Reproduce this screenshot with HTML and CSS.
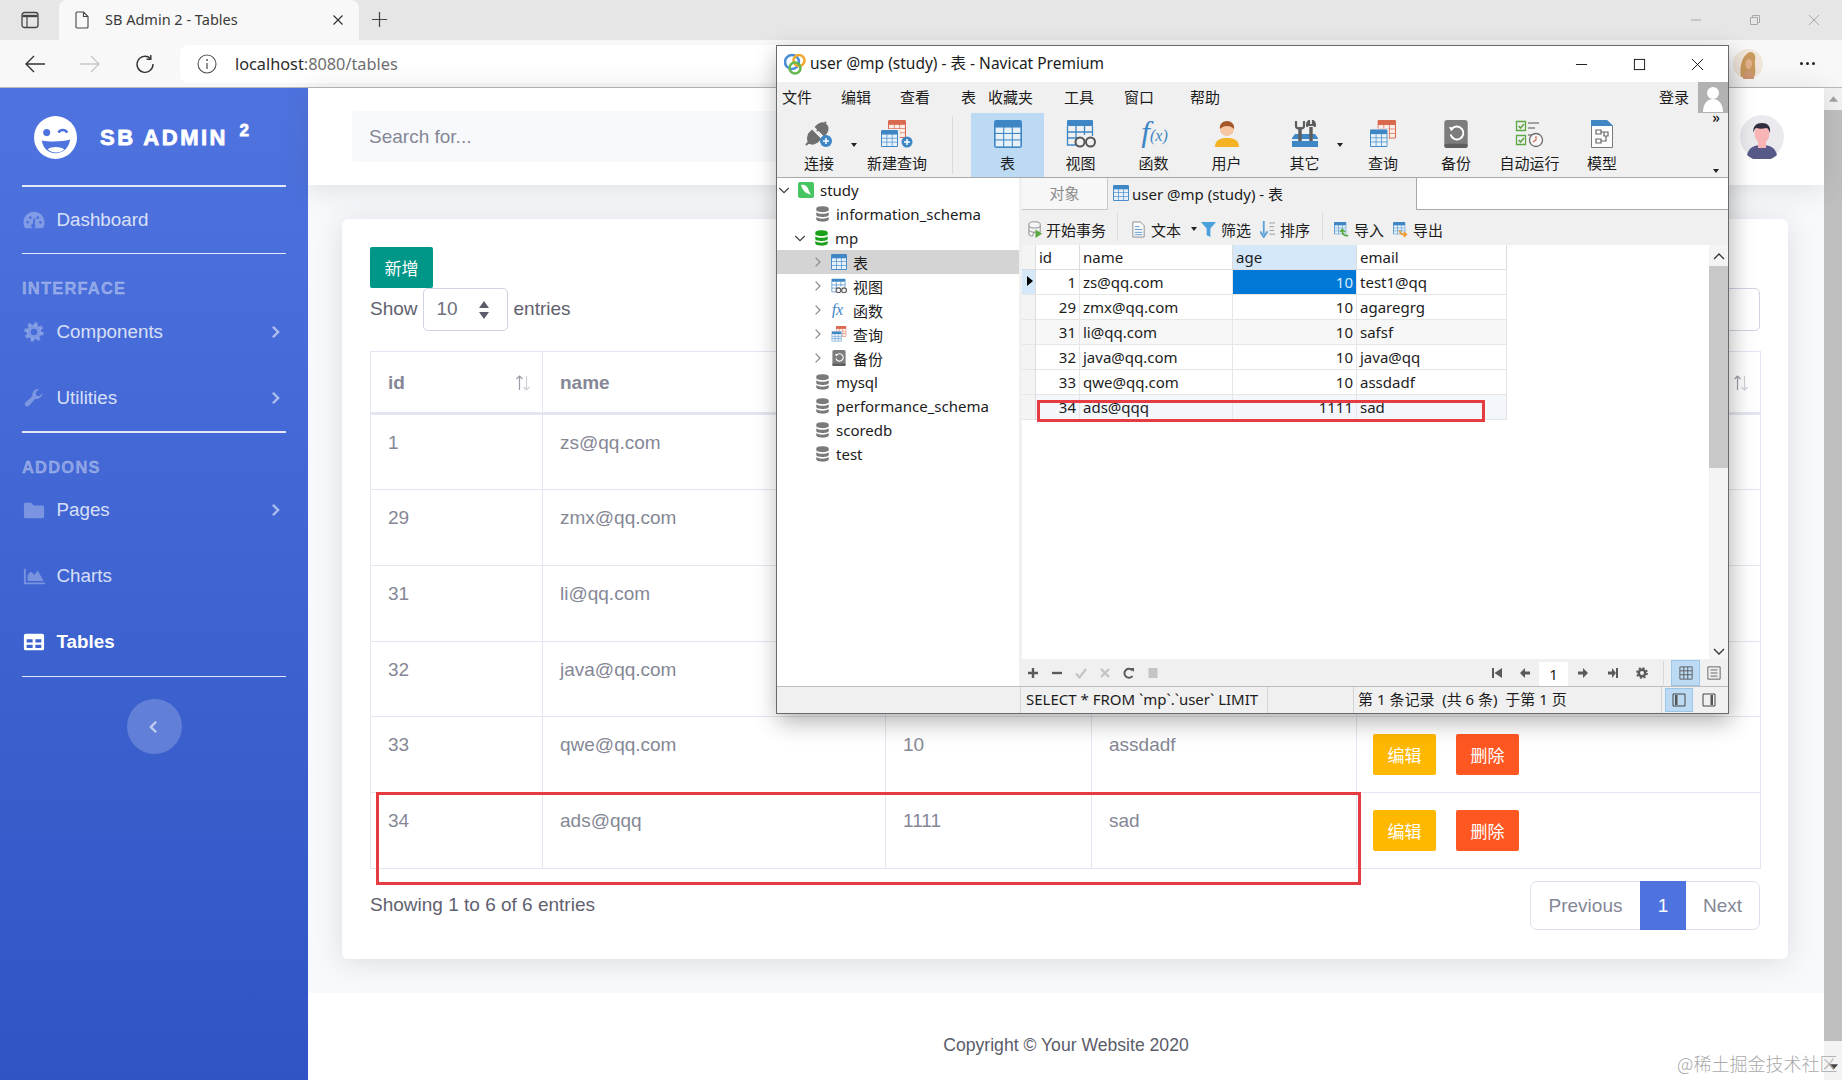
FILE: index.html
```html
<!DOCTYPE html>
<html lang="zh">
<head>
<meta charset="utf-8">
<title>SB Admin 2 - Tables</title>
<link rel="stylesheet" href="styles.css">
</head>
<body>
<svg class="sprite" xmlns="http://www.w3.org/2000/svg">
  <symbol id="t-blue" viewBox="0 0 26 26"><rect width="26" height="26" rx="2" fill="#3f86c5"/><g fill="#e6f1fa"><rect x="1.500" y="7" width="7" height="5"/><rect x="9.500" y="7" width="7" height="5"/><rect x="17.500" y="7" width="7" height="5"/><rect x="1.500" y="13" width="7" height="5"/><rect x="9.500" y="13" width="7" height="5"/><rect x="17.500" y="13" width="7" height="5"/><rect x="1.500" y="19" width="7" height="5.500"/><rect x="9.500" y="19" width="7" height="5.500"/><rect x="17.500" y="19" width="7" height="5.500"/></g></symbol>
  <symbol id="t-red" viewBox="0 0 26 26"><rect width="26" height="26" rx="2" fill="#d9694f"/><g fill="#fbeee9"><rect x="1.500" y="7" width="7" height="5"/><rect x="9.500" y="7" width="7" height="5"/><rect x="17.500" y="7" width="7" height="5"/><rect x="1.500" y="13" width="7" height="5"/><rect x="9.500" y="13" width="7" height="5"/><rect x="17.500" y="13" width="7" height="5"/><rect x="1.500" y="19" width="7" height="5.500"/><rect x="9.500" y="19" width="7" height="5.500"/><rect x="17.500" y="19" width="7" height="5.500"/></g></symbol>
  <symbol id="query" viewBox="0 0 30 30"><use href="#t-red" x="9" y="0" width="20" height="20"/><rect x="0" y="9" width="21" height="21" fill="#f0f0f0"/><use href="#t-blue" x="1" y="10" width="19" height="19"/></symbol>
  <symbol id="view" viewBox="0 0 30 28"><rect x="1" width="26" height="6" rx="1" fill="#3f86c5"/><path d="M1.500 6v19h11M26.500 6v10M1.500 12h25M1.500 18h11M10 6v12M18.500 6v9" fill="none" stroke="#3f86c5" stroke-width="1.300"/><circle cx="14" cy="22" r="4.500" fill="#f0f0f0" stroke="#555" stroke-width="2"/><circle cx="24.500" cy="22" r="4.500" fill="#f0f0f0" stroke="#555" stroke-width="2"/></symbol>
  <symbol id="db" viewBox="0 0 16 18"><path d="M1 3c0-3.500 14-3.500 14 0v1.500c0 3.200-14 3.200-14 0zM1 7c3 2.400 11 2.400 14 0v3c0 3-14 3-14 0zM1 12.500c3 2.400 11 2.400 14 0V15c0 3.500-14 3.500-14 0z" fill="currentColor"/></symbol>
  <symbol id="backup" viewBox="0 0 22 26"><rect width="22" height="26" rx="3" fill="#7c7c7c"/><rect y="22" width="22" height="4" rx="2" fill="#5e5e5e"/><path d="M7 8.500a6 6 0 1 1-1 5" fill="none" stroke="#fff" stroke-width="1.800"/><path d="M4.500 6.500l5 .5-3 3.500z" fill="#fff"/></symbol>
  <symbol id="plus" viewBox="0 0 12 12"><path d="M6 1v10M1 6h10" stroke="currentColor" stroke-width="2.400"/></symbol>
  <symbol id="minus" viewBox="0 0 12 12"><path d="M1 6h10" stroke="currentColor" stroke-width="2.400"/></symbol>
  <symbol id="check" viewBox="0 0 12 12"><path d="M1 6.500l3.500 4L11 2" fill="none" stroke="currentColor" stroke-width="2.200"/></symbol>
  <symbol id="cross" viewBox="0 0 12 12"><path d="M2 2l8 8M10 2l-8 8" stroke="currentColor" stroke-width="2.400"/></symbol>
  <symbol id="refresh" viewBox="0 0 12 12"><path d="M9.500 3.500A4.500 4.500 0 1 0 9.500 9" fill="none" stroke="currentColor" stroke-width="2"/><path d="M7.500 1h3.500v4z" fill="currentColor"/></symbol>
  <symbol id="stop" viewBox="0 0 12 12"><rect x="1.500" y="1" width="9" height="10" fill="currentColor"/></symbol>
  <symbol id="first" viewBox="0 0 12 12"><path d="M2 1v10" stroke="currentColor" stroke-width="2"/><path d="M11 1v10L3.500 6z" fill="currentColor"/></symbol>
  <symbol id="prev" viewBox="0 0 12 12"><path d="M1 6l5-5v3.500h5v3H6V11z" fill="currentColor"/></symbol>
  <symbol id="next" viewBox="0 0 12 12"><path d="M11 6L6 1v3.500H1v3h5V11z" fill="currentColor"/></symbol>
  <symbol id="last" viewBox="0 0 12 12"><path d="M10 1v10" stroke="currentColor" stroke-width="2"/><path d="M1 4.500h4V1l4 5-4 5V7.500H1z" fill="currentColor"/></symbol>
  <symbol id="gear" viewBox="0 0 24 24"><circle cx="12" cy="12" r="6.500" fill="none" stroke="currentColor" stroke-width="5"/><circle cx="12" cy="12" r="10" fill="none" stroke="currentColor" stroke-width="3.500" stroke-dasharray="4 3.850"/></symbol>
  <symbol id="chev-r" viewBox="0 0 10 16"><path d="M2 2l6 6-6 6" fill="none" stroke="currentColor" stroke-width="2.800"/></symbol>
  <symbol id="tree-r" viewBox="0 0 10 14"><path d="M2 1.500L7.500 7 2 12.500" fill="none" stroke="#8a8a8a" stroke-width="1.500"/></symbol>
  <symbol id="tree-d" viewBox="0 0 14 10"><path d="M1.500 2L7 7.500 12.500 2" fill="none" stroke="#444" stroke-width="1.500"/></symbol>
  <symbol id="sort" viewBox="0 0 18 18"><path d="M5.500 16V2M2.500 5l3-3 3 3" fill="none" stroke="#9b9ca8" stroke-width="1.200"/><path d="M12.500 2v14M9.500 13l3 3 3-3" fill="none" stroke="#cfd0d8" stroke-width="1.200"/></symbol>
</svg>

<header class="strip">
  <div class="strip-side">
    <svg class="strip-ic" viewBox="0 0 18 18"><rect x="1" y="1.500" width="16" height="15" rx="2.500" fill="none" stroke="#444" stroke-width="1.300"/><path d="M1.500 5h15" stroke="#444" stroke-width="2.400"/><path d="M6 5v11" stroke="#444" stroke-width="1.200"/></svg>
  </div>
  <div class="tab">
    <svg class="tab-ic" viewBox="0 0 14 18"><path d="M1 2a1 1 0 0 1 1-1h6.500L13 5.500V16a1 1 0 0 1-1 1H2a1 1 0 0 1-1-1zM8.500 1v4.500H13" fill="none" stroke="#444" stroke-width="1.100"/></svg>
    <span class="tab-title">SB Admin 2 - Tables</span>
    <svg class="tab-x" viewBox="0 0 12 12"><path d="M1.500 1.500l9 9M10.500 1.500l-9 9" stroke="#333" stroke-width="1.200"/></svg>
  </div>
  <svg class="tab-new" viewBox="0 0 18 18"><path d="M9 1v16M1 9h16" stroke="#444" stroke-width="1.300"/></svg>
  <div class="win-ctrl">
    <svg viewBox="0 0 12 12"><path d="M1 6h10" stroke="#a8a8a8" stroke-width="1"/></svg>
    <svg viewBox="0 0 12 12"><path d="M1.500 3.500h7v7h-7zM3.500 3.500v-2h7v7h-2" fill="none" stroke="#a8a8a8" stroke-width="1"/></svg>
    <svg viewBox="0 0 12 12"><path d="M1 1l10 10M11 1L1 11" stroke="#a8a8a8" stroke-width="1"/></svg>
  </div>
</header>
<nav class="addr">
  <svg class="addr-back" viewBox="0 0 22 18"><path d="M21 9H2M10 1L2 9l8 8" fill="none" stroke="#333" stroke-width="1.400"/></svg>
  <svg class="addr-fwd" viewBox="0 0 22 18"><path d="M1 9h19M12 1l8 8-8 8" fill="none" stroke="#c8c8c8" stroke-width="1.400"/></svg>
  <svg class="addr-rel" viewBox="0 0 20 20"><path d="M15.500 4.500A8 8 0 1 0 18 10" fill="none" stroke="#333" stroke-width="1.400"/><path d="M15.800 1v4.200h-4.200" fill="none" stroke="#333" stroke-width="1.400"/></svg>
  <div class="addr-field">
    <svg class="addr-info" viewBox="0 0 20 20"><circle cx="10" cy="10" r="9" fill="none" stroke="#555" stroke-width="1.100"/><path d="M10 9v6" stroke="#555" stroke-width="1.300"/><circle cx="10" cy="6" r="1" fill="#555"/></svg>
    <span class="url-host">localhost</span><span class="url-rest">:8080/tables</span>
  </div>
  <div class="addr-right">
    <svg class="addr-pic" viewBox="0 0 30 30"><circle cx="15" cy="15" r="15" fill="#f1e6da"/><path d="M8 28c-2-10 1-22 9-25 5 0 6 5 5 9s2 10-1 16z" fill="#c99a5c"/><path d="M13 12c2-3 6-2 6 2s-2 6-4 6-3-4-2-8z" fill="#e2b28c"/><path d="M10 30c0-6 3-9 6-9s5 4 5 9z" fill="#cf9672"/></svg>
    <span class="addr-more"><i></i><i></i><i></i></span>
  </div>
</nav>

<div class="page">
  <aside class="sidebar">
    <div class="brand">
      <svg class="brand-ic" viewBox="0 0 44 44"><circle cx="22" cy="22" r="22" fill="#fff"/><circle cx="13" cy="17" r="3.600" fill="#4e73df"/><path d="M25 17c2-3.500 7-3.500 9 0" fill="none" stroke="#4e73df" stroke-width="2.600"/><path d="M8 25c8 1.500 20 1.500 29-1-1 9-8 14-15 14S9 33 8 25z" fill="#4e73df"/><path d="M14 34c4-3 12-3 17 0-4 4-12 5-17 0z" fill="#fff"/></svg>
      <span class="brand-text">SB Admin <sup>2</sup></span>
    </div>
    <hr class="side-hr">
    <a class="nav-item">
      <svg class="nav-ic" viewBox="0 0 24 20"><path fill-rule="evenodd" d="M12 1A11.500 11.500 0 0 0 .5 12.500c0 2.500.7 4.800 2 6.500h19c1.300-1.700 2-4 2-6.500A11.500 11.500 0 0 0 12 1zm1.600 7.500l-1 6a2.300 2.300 0 1 1-2-.3l1-6zM5 11a1.500 1.500 0 1 0 0 3 1.500 1.500 0 0 0 0-3zm14 0a1.500 1.500 0 1 0 0 3 1.500 1.500 0 0 0 0-3zM8 6a1.500 1.500 0 1 0 0 3 1.500 1.500 0 0 0 0-3zm8 0a1.500 1.500 0 1 0 0 3 1.500 1.500 0 0 0 0-3z" fill="currentColor"/></svg>
      <span>Dashboard</span>
    </a>
    <hr class="side-hr">
    <div class="side-head">Interface</div>
    <a class="nav-item">
      <svg class="nav-ic" viewBox="0 0 24 24"><use href="#gear"/></svg>
      <span>Components</span>
      <svg class="nav-chev" viewBox="0 0 10 16"><use href="#chev-r"/></svg>
    </a>
    <a class="nav-item">
      <svg class="nav-ic" viewBox="0 0 24 24"><path d="M22 6.500a6.500 6.500 0 0 1-8.500 6.300L5.800 21.500a3 3 0 0 1-4.200-4.200l8.700-7.700A6.500 6.500 0 0 1 18 1.500l-4 4 .8 3.700 3.700.8 4-4c.3.500.5 1 .5 1.500z" fill="currentColor"/></svg>
      <span>Utilities</span>
      <svg class="nav-chev" viewBox="0 0 10 16"><use href="#chev-r"/></svg>
    </a>
    <hr class="side-hr">
    <div class="side-head side-head-b">Addons</div>
    <a class="nav-item">
      <svg class="nav-ic" viewBox="0 0 24 20"><path d="M1 4a2 2 0 0 1 2-2h6l2.500 3H21a2 2 0 0 1 2 2v10a2 2 0 0 1-2 2H3a2 2 0 0 1-2-2z" fill="currentColor"/></svg>
      <span>Pages</span>
      <svg class="nav-chev" viewBox="0 0 10 16"><use href="#chev-r"/></svg>
    </a>
    <a class="nav-item">
      <svg class="nav-ic" viewBox="0 0 24 20"><path d="M1 2h2v15h21v2H1z" fill="currentColor"/><path d="M5 15.500V9l3.500-4 4 4 3.500-5 6.500 11.500z" fill="currentColor"/></svg>
      <span>Charts</span>
    </a>
    <a class="nav-item nav-active">
      <svg class="nav-ic" viewBox="0 0 24 20"><path fill-rule="evenodd" d="M3 1h18a2 2 0 0 1 2 2v14a2 2 0 0 1-2 2H3a2 2 0 0 1-2-2V3a2 2 0 0 1 2-2zm1 6v3.500h6.500V7zm9.500 0v3.500H20V7zM4 13v3.500h6.500V13zm9.500 0v3.500H20V13z" fill="currentColor"/></svg>
      <span>Tables</span>
    </a>
    <hr class="side-hr side-hr-last">
    <div class="side-toggle"><svg viewBox="0 0 10 16"><path d="M8 2L2 8l6 6" fill="none" stroke="currentColor" stroke-width="2.800"/></svg></div>
  </aside>

  <main class="main">
    <div class="topbar">
      <div class="search">Search for...</div>
      <svg class="top-avatar" viewBox="0 0 44 44"><circle cx="22" cy="22" r="22" fill="#e9e9ee"/><path d="M7 40c2-8 8-10 15-10s13 2 15 10a22 22 0 0 1-30 0z" fill="#575a89"/><rect x="18" y="24" width="8" height="9" fill="#f9b5b5"/><ellipse cx="22" cy="19" rx="7.500" ry="9" fill="#f9b5b5"/><path d="M13.500 18c-1-7 3-10 8.500-10s9 3 8 10c-1-3-2-5-4-5-3 1-7 1-9 0-2 0-3 2-3.500 5z" fill="#2f2e41"/></svg>
    </div>

    <section class="card">
      <button class="btn-add">新增</button>
      <div class="len-row">
        <div class="len">
          <span class="len-t">Show</span>
          <span class="sel"><span class="len-t">10</span><svg viewBox="0 0 12 20"><path d="M6 1l5 7H1zM6 19l5-7H1z" fill="#5a5c69"/></svg></span>
          <span class="len-t">entries</span>
        </div>
        <div class="flt"><span class="flt-box"></span></div>
      </div>
      <table class="tbl">
        <colgroup><col class="c1"><col class="c2"><col class="c3"><col class="c4"><col class="c5"></colgroup>
        <thead>
          <tr>
            <th><div class="th-in">id<svg viewBox="0 0 18 18"><use href="#sort"/></svg></div></th>
            <th><div class="th-in">name<svg viewBox="0 0 18 18"><use href="#sort"/></svg></div></th>
            <th><div class="th-in">age<svg viewBox="0 0 18 18"><use href="#sort"/></svg></div></th>
            <th><div class="th-in">email<svg viewBox="0 0 18 18"><use href="#sort"/></svg></div></th>
            <th><div class="th-in">操作<svg viewBox="0 0 18 18"><use href="#sort"/></svg></div></th>
          </tr>
        </thead>
        <tbody>
          <tr><td>1</td><td>zs@qq.com</td><td>10</td><td>test1@qq</td><td class="acts"><button class="btn-e">编辑</button><button class="btn-d">删除</button></td></tr>
          <tr><td>29</td><td>zmx@qq.com</td><td>10</td><td>agaregrg</td><td class="acts"><button class="btn-e">编辑</button><button class="btn-d">删除</button></td></tr>
          <tr><td>31</td><td>li@qq.com</td><td>10</td><td>safsf</td><td class="acts"><button class="btn-e">编辑</button><button class="btn-d">删除</button></td></tr>
          <tr class="row-s"><td>32</td><td>java@qq.com</td><td>10</td><td>java@qq</td><td class="acts"><button class="btn-e">编辑</button><button class="btn-d">删除</button></td></tr>
          <tr><td>33</td><td>qwe@qq.com</td><td>10</td><td>assdadf</td><td class="acts"><button class="btn-e">编辑</button><button class="btn-d">删除</button></td></tr>
          <tr><td>34</td><td>ads@qqq</td><td>1111</td><td>sad</td><td class="acts"><button class="btn-e">编辑</button><button class="btn-d">删除</button></td></tr>
        </tbody>
      </table>
      <div class="info-row">
        <span class="info-t">Showing 1 to 6 of 6 entries</span>
        <div class="pager"><span class="pg-prev">Previous</span><span class="pg-cur">1</span><span class="pg-next">Next</span></div>
      </div>
    </section>

    <footer class="foot">Copyright © Your Website 2020</footer>
  </main>

  <div class="vscroll">
    <svg class="vs-up" viewBox="0 0 12 8"><path d="M6 1l5 6H1z" fill="#a3a3a3"/></svg>
    <div class="vs-thumb"></div>
    <svg class="vs-down" viewBox="0 0 12 8"><path d="M6 7L1 1h10z" fill="#444"/></svg>
  </div>
</div>

<div class="mark-red"></div>
<div class="watermark">@稀土掘金技术社区</div>

<div class="nv">
  <div class="nv-title">
    <svg class="nv-logo" viewBox="0 0 22 22"><circle cx="8" cy="9" r="7" fill="none" stroke="#4c8fd6" stroke-width="2.600"/><circle cx="15" cy="7.500" r="5.500" fill="none" stroke="#f0a92e" stroke-width="2.600"/><circle cx="11" cy="15" r="5.500" fill="none" stroke="#65b84f" stroke-width="2.600"/></svg>
    <span class="nv-title-t">user @mp (study) - 表 - Navicat Premium</span>
    <div class="nv-ctrl">
      <svg viewBox="0 0 14 14"><path d="M1 7h12" stroke="#111" stroke-width="1"/></svg>
      <svg viewBox="0 0 14 14"><rect x="1.500" y="1.500" width="11" height="11" fill="none" stroke="#111" stroke-width="1"/></svg>
      <svg viewBox="0 0 14 14"><path d="M1 1l12 12M13 1L1 13" stroke="#111" stroke-width="1"/></svg>
    </div>
  </div>
  <div class="nv-menu">
    <div class="nv-menu-items"><span>文件</span><span>编辑</span><span>查看</span><span>表</span><span>收藏夹</span><span>工具</span><span>窗口</span><span>帮助</span></div>
    <span class="nv-login">登录</span>
    <div class="nv-user"><svg viewBox="0 0 30 30"><circle cx="15" cy="11" r="6" fill="#fff"/><path d="M5 30c0-9 5-13 10-13s10 4 10 13z" fill="#fff"/></svg></div>
  </div>
  <div class="nv-tools">
    <div class="tool">
      <svg class="tool-ic" viewBox="0 0 34 28"><path d="M4 25l5-5M15 11l5-5 4-4M10 11l8 8-3 3c-3 2-6 2-8 0s-1-5 0-8zM14 7l2-2c3-2 6-2 8 0s2 5 0 8l-2 2z" fill="#6f6f6f" stroke="#6f6f6f" stroke-width="2"/><circle cx="24" cy="21" r="6" fill="#3f86c5"/><path d="M24 18v6M21 21h6" stroke="#fff" stroke-width="1.500"/></svg>
      <span>连接</span><i class="caret caret-a"></i>
    </div>
    <div class="tool">
      <svg class="tool-ic" viewBox="0 0 34 28"><use href="#t-red" x="8" y="0" width="18" height="18"/><rect x="0" y="9" width="20" height="19" fill="#f0f0f0"/><use href="#t-blue" x="1" y="10" width="17" height="17"/><circle cx="27" cy="22" r="5.500" fill="#3f86c5"/><path d="M27 19v6M24 22h6" stroke="#fff" stroke-width="1.500"/></svg>
      <span>新建查询</span>
    </div>
    <div class="tool-sep"></div>
    <div class="tool tool-on">
      <svg class="tool-ic" viewBox="0 0 26 26"><use href="#t-blue"/></svg>
      <span>表</span>
    </div>
    <div class="tool">
      <svg class="tool-ic" viewBox="0 0 30 28"><use href="#view"/></svg>
      <span>视图</span>
    </div>
    <div class="tool">
      <svg class="tool-ic" viewBox="0 0 30 28"><text class="fx-f" x="2" y="23">f</text><text class="fx-x" x="11" y="21">(x)</text></svg>
      <span>函数</span>
    </div>
    <div class="tool">
      <svg class="tool-ic" viewBox="0 0 26 28"><path d="M1 27c0-7 5-9 12-9s12 2 12 9z" fill="#f5b324"/><circle cx="13" cy="9" r="7" fill="#f6c6a4"/><path d="M6 9c-1-5 3-8 7-8s8 3 7 8c-2-2-4-3-7-3S8 7 6 9z" fill="#a5572b"/></svg>
      <span>用户</span>
    </div>
    <div class="tool">
      <svg class="tool-ic" viewBox="0 0 28 28"><path d="M1 18l3-4h20l3 4v9H1z" fill="#3f86c5"/><rect x="1" y="19" width="26" height="2" fill="#dcebf7"/><path d="M9 7v14M20 7v14" stroke="#5d5d5d" stroke-width="3.400"/><path d="M5 1v5c0 3.500 8 3.500 8 0V1M16.500 7c-1-3 0-5 1.500-6v4h4V1c1.500 1 2.500 3 1.500 6" fill="none" stroke="#5d5d5d" stroke-width="2.200"/></svg>
      <span>其它</span><i class="caret caret-b"></i>
    </div>
    <div class="tool">
      <svg class="tool-ic" viewBox="0 0 30 30"><use href="#query"/></svg>
      <span>查询</span>
    </div>
    <div class="tool">
      <svg class="tool-ic" viewBox="0 0 22 26"><use href="#backup"/></svg>
      <span>备份</span>
    </div>
    <div class="tool">
      <svg class="tool-ic" viewBox="0 0 30 28"><path d="M1.500 1.500h9v9h-9zM1.500 15.500h9v9h-9z" fill="#f0f0f0" stroke="#5da744" stroke-width="1.300"/><path d="M3.500 6l2 2 3.500-4M3.500 20l2 2 3.500-4" fill="none" stroke="#5da744" stroke-width="1.600"/><path d="M13 3h11M13 8h7M13 15h4" stroke="#a0a0a0" stroke-width="2"/><circle cx="21" cy="20" r="6.500" fill="#f8f8f8" stroke="#6b6b6b" stroke-width="1.300"/><path d="M21 16v4l-3 2" fill="none" stroke="#c75c4a" stroke-width="1.100"/></svg>
      <span>自动运行</span>
    </div>
    <div class="tool">
      <svg class="tool-ic" viewBox="0 0 22 28"><path d="M.5.500H16L21.500 6v21.500H.5z" fill="#fcfcfc" stroke="#7a7a7a"/><path d="M0 0h16l6 6H0z" fill="#3f86c5"/><path d="M5 10h5v4H5zM13 12h4v4h-4zM5 19h5v4H5zM10 12h3M15 16v5h-5" fill="none" stroke="#666" stroke-width="1.200"/></svg>
      <span>模型</span>
    </div>
    <span class="tools-more">»</span>
    <i class="caret caret-c"></i>
  </div>
  <div class="nv-body">
    <div class="tree">
      <div class="tr tr-0"><svg class="tw" viewBox="0 0 14 10"><use href="#tree-d"/></svg><svg class="tr-db" viewBox="0 0 16 16"><rect width="16" height="16" rx="2" fill="#47c560"/><path d="M3 3c4-1 7 2 8 6l2 4-3-1.500C7 11 4 7 3 3z" fill="#fff"/></svg><span>study</span></div>
      <div class="tr tr-1"><svg class="db-gray" viewBox="0 0 16 18"><use href="#db"/></svg><span>information_schema</span></div>
      <div class="tr tr-0b"><svg class="tw" viewBox="0 0 14 10"><use href="#tree-d"/></svg><svg class="db-green" viewBox="0 0 16 18"><use href="#db"/></svg><span>mp</span></div>
      <div class="tr tr-2 tr-sel"><svg class="tw-r" viewBox="0 0 10 14"><use href="#tree-r"/></svg><svg class="tr-ic" viewBox="0 0 26 26"><use href="#t-blue"/></svg><span>表</span></div>
      <div class="tr tr-2"><svg class="tw-r" viewBox="0 0 10 14"><use href="#tree-r"/></svg><svg class="tr-ic" viewBox="0 0 30 28"><use href="#view"/></svg><span>视图</span></div>
      <div class="tr tr-2"><svg class="tw-r" viewBox="0 0 10 14"><use href="#tree-r"/></svg><svg class="tr-ic" viewBox="0 0 24 24"><text class="fx-s" x="1" y="20">fx</text></svg><span>函数</span></div>
      <div class="tr tr-2"><svg class="tw-r" viewBox="0 0 10 14"><use href="#tree-r"/></svg><svg class="tr-ic" viewBox="0 0 30 30"><use href="#query"/></svg><span>查询</span></div>
      <div class="tr tr-2"><svg class="tw-r" viewBox="0 0 10 14"><use href="#tree-r"/></svg><svg class="tr-ic" viewBox="0 0 22 26"><use href="#backup"/></svg><span>备份</span></div>
      <div class="tr tr-1"><svg class="db-gray" viewBox="0 0 16 18"><use href="#db"/></svg><span>mysql</span></div>
      <div class="tr tr-1"><svg class="db-gray" viewBox="0 0 16 18"><use href="#db"/></svg><span>performance_schema</span></div>
      <div class="tr tr-1"><svg class="db-gray" viewBox="0 0 16 18"><use href="#db"/></svg><span>scoredb</span></div>
      <div class="tr tr-1"><svg class="db-gray" viewBox="0 0 16 18"><use href="#db"/></svg><span>test</span></div>
    </div>
    <div class="pane">
      <div class="tabs">
        <span class="tb-obj">对象</span>
        <span class="tb-user"><svg viewBox="0 0 26 26"><use href="#t-blue"/></svg>user @mp (study) - 表</span>
        <span class="tb-rest"></span>
      </div>
      <div class="sub">
        <span class="si si-begin"><svg viewBox="0 0 16 18"><path d="M1 3c0-3 12-3 12 0v9H6l-1 4c-2 0-4-.5-4-2z" fill="#f5f5f5" stroke="#8a8a8a"/><path d="M1 6c2 2 10 2 12 0M1 10c2 2 5 2 6 1.500" fill="none" stroke="#8a8a8a"/><path d="M8 9l7 4.500L8 18z" fill="#59a83f"/></svg>开始事务</span>
        <i class="sub-sep"></i>
        <span class="si si-text"><svg viewBox="0 0 14 18"><path d="M1 1h8l4 4v12H1z" fill="#fbfbfb" stroke="#8a8a8a"/><path d="M3 6h5M3 9h8M3 12h8M3 14.500h8" stroke="#5b93c9"/></svg>文本</span><i class="caret caret-d"></i>
        <span class="si si-filter"><svg viewBox="0 0 16 16"><path d="M0 0h16L10 7v9l-4-2V7z" fill="#48a0dc"/></svg>筛选</span>
        <span class="si si-sort"><svg viewBox="0 0 16 18"><path d="M4 0v14M0 11l4 6 4-6" fill="none" stroke="#5fa1d8" stroke-width="2"/><path d="M10 2h6M10 6h5M10 10h5M10 14h6" stroke="#999"/></svg>排序</span>
        <i class="sub-sep sub-sep-b"></i>
        <span class="si si-imp"><svg viewBox="0 0 18 18"><use href="#t-blue" width="15" height="15"/><path d="M17 16c-4 1-7-1-7-5M7.500 12l2.500-3 3 3" fill="none" stroke="#59a83f" stroke-width="2"/></svg>导入</span>
        <span class="si si-exp"><svg viewBox="0 0 18 18"><use href="#t-blue" width="15" height="15"/><path d="M8 10c0 4 3 5.500 7 5M13 12l3 3-3 3" fill="none" stroke="#ef9a2a" stroke-width="2"/></svg>导出</span>
      </div>
      <div class="gridwrap">
        <div class="grid-main">
          <table class="grid">
            <colgroup><col class="g0"><col class="g1"><col class="g2"><col class="g3"><col class="g4"></colgroup>
            <thead><tr><th class="rh"></th><th>id</th><th>name</th><th class="col-on">age</th><th>email</th></tr></thead>
            <tbody>
              <tr><td class="rh rh-on"><i class="tri"></i></td><td class="r">1</td><td>zs@qq.com</td><td class="r cell-on">10</td><td>test1@qq</td></tr>
              <tr><td class="rh"></td><td class="r">29</td><td>zmx@qq.com</td><td class="r">10</td><td>agaregrg</td></tr>
              <tr class="alt"><td class="rh"></td><td class="r">31</td><td>li@qq.com</td><td class="r">10</td><td>safsf</td></tr>
              <tr><td class="rh"></td><td class="r">32</td><td>java@qq.com</td><td class="r">10</td><td>java@qq</td></tr>
              <tr><td class="rh"></td><td class="r">33</td><td>qwe@qq.com</td><td class="r">10</td><td>assdadf</td></tr>
              <tr class="new"><td class="rh"></td><td class="r">34</td><td>ads@qqq</td><td class="r">1111</td><td>sad</td></tr>
            </tbody>
          </table>
          <div class="grid-red"></div>
        </div>
        <div class="grid-sb">
          <svg class="sb-up" viewBox="0 0 12 8"><path d="M1 7l5-5 5 5" fill="none" stroke="#333" stroke-width="1.300"/></svg>
          <div class="sb-thumb"></div>
          <svg class="sb-dn" viewBox="0 0 12 8"><path d="M1 1l5 5 5-5" fill="none" stroke="#333" stroke-width="1.300"/></svg>
        </div>
      </div>
      <div class="bbar">
        <div class="bb-left">
          <svg viewBox="0 0 12 12" class="b-d"><use href="#plus"/></svg>
          <svg viewBox="0 0 12 12" class="b-d"><use href="#minus"/></svg>
          <svg viewBox="0 0 12 12" class="b-l"><use href="#check"/></svg>
          <svg viewBox="0 0 12 12" class="b-l"><use href="#cross"/></svg>
          <svg viewBox="0 0 12 12" class="b-d"><use href="#refresh"/></svg>
          <svg viewBox="0 0 12 12" class="b-l"><use href="#stop"/></svg>
        </div>
        <div class="bb-right">
          <svg viewBox="0 0 12 12" class="b-d"><use href="#first"/></svg>
          <svg viewBox="0 0 12 12" class="b-d"><use href="#prev"/></svg>
          <span class="bb-page">1</span>
          <svg viewBox="0 0 12 12" class="b-d"><use href="#next"/></svg>
          <svg viewBox="0 0 12 12" class="b-d"><use href="#last"/></svg>
          <svg viewBox="0 0 24 24" class="b-d"><use href="#gear"/></svg>
          <i class="bb-sep"></i>
          <span class="bb-on"><svg viewBox="0 0 16 16"><path d="M1 1h14v14H1zM1 5.500h14M1 10h14M5.500 1v14M10 1v14" fill="none" stroke="#555"/></svg></span>
          <svg viewBox="0 0 16 16" class="bb-form"><path d="M1 1h14v14H1zM4 4.500h8M4 8h8M4 11.500h8" fill="none" stroke="#555"/></svg>
        </div>
      </div>
    </div>
  </div>
  <div class="status">
    <span class="st-a"></span>
    <span class="st-b">SELECT * FROM `mp`.`user` LIMIT</span>
    <span class="st-c"></span>
    <span class="st-d">第 1 条记录  (共 6 条)  于第 1 页</span>
    <span class="st-on"><svg viewBox="0 0 14 14"><path d="M1 1h12v12H1z" fill="none" stroke="#444"/><path d="M3 2h2.500v10H3z" fill="#555"/></svg></span>
    <svg class="st-ic" viewBox="0 0 14 14"><path d="M1 1h12v12H1z" fill="none" stroke="#444"/><path d="M8.500 2H11v10H8.500z" fill="#555"/></svg>
  </div>
</div>
</body>
</html>
```
FILE: styles.css
```css
* { box-sizing: border-box; }
html, body { margin: 0; padding: 0; }
body {
  width: 1842px;
  height: 1080px;
  overflow: hidden;
  position: relative;
  background: #fff;
  font-family: "Liberation Sans", "Noto Sans CJK SC", sans-serif;
  font-size: 19px;
  color: #858796;
}
.sprite { display: none; }
svg { display: block; flex: none; }

/* browser chrome */
.strip { height: 40px; background: #e6e6e6; display: flex; align-items: flex-end; position: relative; }
.strip-side { width: 59px; height: 40px; display: flex; align-items: center; padding-left: 21px; }
.strip-ic { width: 18px; height: 18px; }
.tab { width: 300px; height: 40px; background: #f8f8f8; border-radius: 8px 8px 0 0; display: flex; align-items: center; padding-left: 16px; color: #333; }
.tab-ic { width: 14px; height: 18px; margin-right: 16px; }
.tab-title { font: 14.500px/18px "Noto Sans", sans-serif; color: #3a3a3a; flex: 1; padding-bottom: 2px; }
.tab-x { width: 12px; height: 12px; margin-right: 15px; }
.tab-new { width: 17px; height: 17px; margin: 0 0 12px 12px; }
.win-ctrl { margin-left: auto; height: 40px; display: flex; align-items: center; gap: 47px; padding-right: 22px; }
.win-ctrl svg { width: 12px; height: 12px; }
.addr { height: 48px; background: #f8f8f8; border-bottom: 1px solid #b9b9b9; display: flex; align-items: center; }
.addr-back { width: 22px; height: 18px; margin-left: 24px; }
.addr-fwd { width: 22px; height: 18px; margin-left: 33px; }
.addr-rel { width: 20px; height: 20px; margin-left: 34px; }
.addr-field { width: 600px; height: 38px; margin-left: 25px; background: #fff; border-radius: 8px 0 0 8px; display: flex; align-items: center; font: 16.300px "Noto Sans", sans-serif; }
.addr-info { width: 20px; height: 20px; margin: 0 18px 0 17px; }
.url-host { color: #2b2b2b; }
.url-rest { color: #6e6e6e; }
.addr-right { margin-left: auto; display: flex; align-items: center; padding-right: 27px; }
.addr-pic { width: 30px; height: 30px; margin-right: 37px; }
.addr-more { display: flex; gap: 3px; }
.addr-more i { width: 3px; height: 3px; background: #222; border-radius: 50%; }

/* page frame */
.page { height: 992px; display: flex; }
.sidebar { width: 308px; flex: none; background: linear-gradient(180deg, #4e73df 3%, #2f55c4 100%); display: flex; flex-direction: column; }
.brand { height: 97px; display: flex; align-items: center; padding: 0 0 0 34px; }
.brand-ic { width: 43px; height: 43px; margin-top: 1px; }
.brand-text { margin: 2px 0 0 23px; font-size: 22px; font-weight: 700; text-transform: uppercase; letter-spacing: 2.500px; color: #fff; -webkit-text-stroke: .8px #fff; }
.brand-text sup { font-size: 17px; line-height: 0; vertical-align: 9px; margin-left: 3px; }
.side-hr { height: 1.500px; margin: 0 22px; border: 0; background: rgba(255, 255, 255, .85); flex: none; }
.side-hr-last { margin-top: 1px; }
.nav-item { height: 66px; display: flex; align-items: center; padding: 0 28px 0 23px; color: rgba(255, 255, 255, .8); font-size: 18.800px; }
.nav-ic { width: 22px; height: 20px; margin-right: 11.500px; color: rgba(255, 255, 255, .3); }
.nav-chev { width: 9px; height: 14px; margin-left: auto; color: rgba(255, 255, 255, .55); }
.nav-active { color: #fff; font-weight: 700; }
.nav-active .nav-ic { color: #fff; }
.side-head { padding: 24px 22px 0; height: 45px; line-height: 20px; font-size: 16.500px; font-weight: 700; letter-spacing: 1.200px; text-transform: uppercase; color: rgba(255, 255, 255, .4); -webkit-text-stroke: .3px rgba(255, 255, 255, .4); }
.side-head-b { height: 44px; }
.side-toggle { width: 55px; height: 55px; border-radius: 50%; background: rgba(255, 255, 255, .2); margin: 22px auto 0; display: flex; align-items: center; justify-content: center; color: rgba(255, 255, 255, .6); }
.side-toggle svg { width: 9px; height: 14px; margin-right: 2px; }

.main { flex: 1; min-width: 0; background: #f8f9fc; display: flex; flex-direction: column; }
.topbar { height: 97px; flex: none; background: #fff; box-shadow: 0 3px 28px rgba(58, 59, 69, .15); display: flex; align-items: center; padding: 0 40px 0 44px; position: relative; }
.search { width: 520px; height: 51px; background: #f8f9fc; border-radius: 4px; padding-left: 17px; line-height: 52px; color: #858796; }
.top-avatar { width: 44px; height: 44px; margin-left: auto; }

.card { margin: 34px 36px 34px 34px; height: 740px; flex: none; background: #fff; border-radius: 6px; box-shadow: 0 3px 28px rgba(58, 59, 69, .15); padding: 28px; position: relative; }
.btn-add { display: block; width: 63px; height: 41px; border: 0; border-radius: 2px; padding: 0; background: #009688; color: #fff; font: 17px "Noto Sans CJK SC", sans-serif; }
.len-row { height: 43px; display: flex; justify-content: space-between; align-items: center; }
.len { display: flex; align-items: center; color: #5f616f; }
.len-t { padding-bottom: 2px; }
.sel { width: 85px; height: 43px; margin: 0 6px 0 5px; border: 1px solid #d1d3e2; border-radius: 5px; display: flex; align-items: center; justify-content: space-between; padding: 0 17px 0 13px; color: #6e707e; }
.sel svg { width: 12px; height: 20px; }
.flt-box { display: block; width: 200px; height: 43px; border: 1px solid #d1d3e2; border-radius: 5px; }
.tbl { width: 1390px; margin-top: 20px; border-collapse: collapse; table-layout: fixed; }
.c1 { width: 172px; } .c2 { width: 343px; } .c3 { width: 206px; } .c4 { width: 265px; } .c5 { width: 404px; }
.tbl th, .tbl td { border: 1px solid #e3e6f0; text-align: left; }
.tbl th { height: 62px; padding: 2px 10px 0 17px; border-bottom: 3px solid #e3e6f0; color: #858796; font-weight: 700; }
.th-in { display: flex; justify-content: space-between; align-items: center; }
.th-in svg { width: 18px; height: 18px; }
.tbl td { height: 76px; padding: 14px 17px 0; vertical-align: top; line-height: 28px; }
.tbl .row-s td { height: 75px; }
.tbl .acts { padding-left: 16px; }
.tbl td button { display: inline-block; vertical-align: top; width: 63px; height: 41px; border: 0; border-radius: 2px; padding: 0; margin-top: 3px; color: #fff; font: 17px "Noto Sans CJK SC", sans-serif; }
.btn-e { background: #ffb800; }
.tbl td .btn-d { background: #ff5722; margin-left: 20px; }
.info-row { margin-top: 12px; display: flex; justify-content: space-between; align-items: center; color: #5f616f; }
.info-t { padding-bottom: 2px; }
.pager { display: flex; height: 49px; border: 1px solid #dddfeb; border-radius: 7px; line-height: 47px; color: #858796; }
.pg-prev { width: 109px; text-align: center; }
.pg-cur { width: 46px; margin: -1px 0; line-height: 49px; text-align: center; background: #4e73df; color: #fff; }
.pg-next { width: 73px; text-align: center; }
.foot { height: 87px; flex: none; background: #fff; text-align: center; padding-top: 37px; font-size: 17.600px; line-height: 30px; color: #5a5c69; }

.vscroll { width: 18px; flex: none; background: #f3f3f3; display: flex; flex-direction: column; align-items: center; }
.vs-up { width: 11px; height: 8px; margin: 7px 0 7px; }
.vs-thumb { width: 100%; height: 931px; background: #bfbfbf; }
.vs-down { width: 11px; height: 8px; margin-top: 22px; }

.mark-red { position: absolute; left: 376px; top: 792px; width: 985px; height: 93px; border: 3px solid #e63b40; }
.watermark { position: absolute; left: 1677px; top: 1049px; font: 300 18px/28px "Noto Sans CJK SC", sans-serif; color: #a9a9a9; white-space: nowrap; }

/* navicat */
.nv { position: absolute; left: 776px; top: 45px; width: 953px; height: 669px; border: 1px solid #6a6a6a; background: #f0f0f0; box-shadow: 2px 8px 22px rgba(0, 0, 0, .3); display: flex; flex-direction: column; font-family: "Noto Sans", "Noto Sans CJK SC", sans-serif; font-size: 15px; color: #1c1c1c; }
.nv-title { height: 36px; flex: none; background: #fff; display: flex; align-items: center; padding-left: 7px; }
.nv-logo { width: 22px; height: 22px; }
.nv-title-t { margin-left: 4px; padding-bottom: 3px; font-size: 15.500px; }
.nv-ctrl { margin-left: auto; display: flex; gap: 45px; padding-right: 24px; }
.nv-ctrl svg { width: 13px; height: 13px; }
.nv-menu { height: 31px; flex: none; display: flex; align-items: center; padding-left: 5px; font-family: "Noto Sans CJK SC", sans-serif; }
.nv-menu-items { display: grid; grid-template-columns: 59px 59px 61px 27px 76px 60px 66px auto; padding-bottom: 2px; }
.nv-login { margin-left: auto; margin-right: 9px; padding-bottom: 2px; }
.nv-user { width: 30px; height: 31px; background: #b2b2b2; overflow: hidden; }
.nv-user svg { width: 30px; height: 30px; }
.nv-tools { height: 65px; flex: none; border-bottom: 1px solid #a8a8a8; display: grid; grid-template-columns: 84px 72px 38px 73px 73px 73px 73px 83px 74px 72px 75px 70px; position: relative; font-family: "Noto Sans CJK SC", sans-serif; }
.tool { height: 64px; padding-top: 7px; display: flex; flex-direction: column; align-items: center; position: relative; }
.tool-ic { height: 28px; width: 34px; }
.tool span { margin-top: 4px; line-height: 21px; }
.tool-on { background: #bcdaf3; }
.tool-sep { width: 1px; height: 58px; margin: 3px 0 0 19px; background: #dadada; }
.caret { position: absolute; width: 0; height: 0; border: 3.500px solid transparent; border-top: 4px solid #222; border-bottom: 0; }
.caret-a { left: 74px; top: 30px; }
.caret-b { left: 74px; top: 30px; }
.caret-c { left: 936px; top: 56px; }
.tools-more { position: absolute; left: 935px; top: -6px; font-size: 15px; line-height: 20px; font-weight: 700; }
.fx-f { font: italic 32px "Liberation Serif", serif; fill: #3f86c5; }
.fx-x { font: italic 16px "Liberation Serif", serif; fill: #3f86c5; }
.fx-s { font: italic 24px "Liberation Serif", serif; fill: #3f86c5; }

.nv-body { flex: 1; min-height: 0; display: flex; }
.tree { width: 242px; flex: none; background: #fff; }
.tr { height: 24px; display: flex; align-items: center; }
.tr-0 { padding-left: 1px; }
.tr-0b { padding-left: 17px; }
.tr-1 { padding-left: 38px; }
.tr-2 { padding-left: 37px; }
.tr-sel { background: #d4d4d4; }
.tw { width: 12px; height: 9px; margin-right: 8px; }
.tw-r { width: 8px; height: 12px; margin-right: 9px; }
.tr-db { width: 16px; height: 16px; margin-right: 6px; }
.db-gray, .db-green { width: 15px; height: 16px; margin-right: 6px; color: #7a7a7a; }
.db-green { color: #1aa11a; }
.tr-ic { width: 16px; height: 16px; margin-right: 6px; }
.pane { flex: 1; min-width: 0; margin-left: 3px; display: flex; flex-direction: column; }
.tabs { height: 32px; flex: none; display: flex; }
.tb-obj { width: 86px; background: #f7f7f7; color: #8c8c8c; text-align: center; line-height: 30px; border-bottom: 1px solid #c8c8c8; border-right: 1px solid #c8c8c8; font-family: "Noto Sans CJK SC", sans-serif; }
.tb-user { width: 308px; display: flex; align-items: center; padding: 0 0 2px 5px; }
.tb-user svg { width: 16px; height: 16px; margin-right: 3px; }
.tb-rest { flex: 1; background: #fff; border-left: 1px solid #a8a8a8; border-bottom: 1px solid #a8a8a8; }
.sub { height: 35px; flex: none; display: flex; align-items: center; position: relative; font-family: "Noto Sans", "Noto Sans CJK SC", sans-serif; font-size: 15px; }
.si { position: absolute; top: 9px; display: flex; align-items: center; height: 20px; gap: 5px; }
.si svg { width: 15px; height: 17px; }
.si-begin { left: 6px; gap: 3px; }
.si-text { left: 109px; }
.si-filter { left: 179px; }
.si-sort { left: 238px; }
.si-imp { left: 312px; }
.si-exp { left: 371px; }
.sub-sep { position: absolute; left: 95px; top: 3px; width: 1px; height: 28px; background: #dcdcdc; }
.sub-sep-b { left: 300px; }
.caret-d { left: 169px; top: 17px; }
.gridwrap { flex: 1; min-height: 0; display: flex; background: #fff; }
.grid-main { flex: 1; position: relative; min-width: 0; }
.grid { border-collapse: separate; border-spacing: 0; table-layout: fixed; width: 485px; }
.g0 { width: 14px; } .g1 { width: 44px; } .g2 { width: 153px; } .g3 { width: 124px; } .g4 { width: 150px; }
.grid th, .grid td { height: 25px; padding: 0 3px; border-right: 1px solid #e6e6e6; border-bottom: 1px solid #e6e6e6; font-weight: 400; text-align: left; line-height: 23px; white-space: nowrap; overflow: hidden; }
.grid th { background: #fff; border-bottom-color: #dcdcdc; border-right-color: #dcdcdc; height: 25px; }
.grid .rh { background: #f4f4f4; padding: 0; position: relative; border-right-color: #dcdcdc; }
.grid .rh-on { background: #d5e8f9; }
.grid .col-on { background: #d5e8f9; }
.grid .r { text-align: right; padding-right: 3px; }
.grid .cell-on { background: #0078d7; color: #d8ecfb; }
.alt td { background: #f7f7f7; }
.new td { background: #f3f7fc; }
.tri { position: absolute; left: 5px; top: 6px; width: 0; height: 0; border: 5.500px solid transparent; border-left: 6px solid #000; border-right: 0; }
.grid-red { position: absolute; left: 15px; top: 155px; width: 448px; height: 22px; border: 3px solid #e63b40; }
.grid-sb { width: 19px; flex: none; background: #f4f4f4; display: flex; flex-direction: column; align-items: center; }
.sb-up { width: 12px; height: 8px; margin: 7px 0 6px; }
.sb-thumb { width: 100%; height: 202px; background: #c8c8c8; }
.sb-dn { width: 12px; height: 8px; margin-top: auto; margin-bottom: 3px; }
.bbar { height: 27px; flex: none; display: flex; justify-content: space-between; align-items: center; }
.bb-left { display: flex; align-items: center; padding-left: 5px; gap: 12px; }
.bb-left svg { width: 12px; height: 12px; }
.b-d { color: #5a5a5a; }
.b-l { color: #c4c4c4; }
.bb-right { display: grid; grid-template-columns: 26px 29px 29px 30px 30px 28px 15px 29px 28px; align-items: center; justify-items: center; height: 27px; }
.bb-right svg { width: 12px; height: 12px; }
.bb-page { width: 29px; height: 24px; background: #fff; text-align: center; line-height: 24px; align-self: end; }
.bb-sep { width: 1px; height: 24px; background: #d8d8d8; }
.bb-on { width: 29px; height: 26px; background: #bcdaf3; border: 1px solid #9ac6ea; display: flex; align-items: center; justify-content: center; }
.bb-right .bb-on svg, .bb-right .bb-form { width: 14px; height: 14px; }
.status { height: 27px; flex: none; display: flex; align-items: center; border-top: 1px solid #bdbdbd; font-size: 15px; font-family: "Noto Sans", "Noto Sans CJK SC", sans-serif; }
.status span { height: 100%; }
.st-a { width: 244px; border-right: 1px solid #d4d4d4; }
.st-b { width: 247px; padding-left: 5px; line-height: 25px; border-right: 1px solid #d4d4d4; white-space: nowrap; overflow: hidden; }
.st-c { width: 86px; border-right: 1px solid #d4d4d4; }
.st-d { width: 308px; padding-left: 4px; line-height: 25px; white-space: pre; border-right: 1px solid #d4d4d4; }
.status .st-on { width: 28px; height: 24px; margin-left: 3px; background: #bcdaf3; border: 1px solid #9ac6ea; display: flex; align-items: center; justify-content: center; }
.st-on svg { width: 14px; height: 14px; }
.st-ic { width: 14px; height: 14px; margin-left: 9px; }
```
